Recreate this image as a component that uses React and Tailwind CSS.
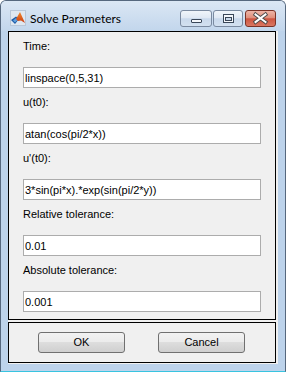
const fields = [
  { label: "Time:", value: "linspace(0,5,31)" },
  { label: "u(t0):", value: "atan(cos(pi/2*x))" },
  { label: "u'(t0):", value: "3*sin(pi*x).*exp(sin(pi/2*y))" },
  { label: "Relative tolerance:", value: "0.01" },
  { label: "Absolute tolerance:", value: "0.001" },
];

const MatlabIcon = () => (
  <svg width="16" height="16" viewBox="0 0 16 16">
    <defs>
      <linearGradient id="peak" x1="0" y1="0" x2="0" y2="1">
        <stop offset="0" stopColor="#f28a2c" />
        <stop offset="1" stopColor="#c93a12" />
      </linearGradient>
    </defs>
    <rect x="0.5" y="0.5" width="15" height="15" fill="#dfe7f0" stroke="#b9c7d8" />
    <polygon points="1,10 6,6.5 9,9 5,14" fill="#1d5aa6" />
    <polygon points="3,10.5 6,8 8,9.5 5,12.5" fill="#5fa0dc" />
    <polygon points="6,9 10,2 15,13 11,10.5 8,11" fill="url(#peak)" />
  </svg>
);

const CaptionButton = ({ kind }) => {
  if (kind === "close") {
    return (
      <div className="ml-[2px] h-[17px] w-[31px] rounded-[3px] border border-[#7a3226] bg-[linear-gradient(to_bottom,#eeb5a7_0%,#e08f7c_45%,#cd5540_52%,#da7762_100%)]">
        <svg width="29" height="15" viewBox="0 0 29 15">
          <path d="M9.5 3.5 L19.5 11 M19.5 3.5 L9.5 11" stroke="#4a4a4a" strokeWidth="3.8" strokeLinecap="square" />
          <path d="M9.5 3.5 L19.5 11 M19.5 3.5 L9.5 11" stroke="#ffffff" strokeWidth="2" strokeLinecap="square" />
        </svg>
      </div>
    );
  }
  return (
    <div
      className={`${kind === "max" ? "ml-[1px] w-[30px]" : "w-[32px]"} h-[17px] rounded-[3px] border border-[#7a8aa0] bg-[linear-gradient(to_bottom,#f0f5fa_0%,#e0e9f4_45%,#c9d9ec_52%,#d3e1f0_100%)]`}
    >
      {kind === "min" ? (
        <svg width="30" height="15" viewBox="0 0 30 15">
          <rect x="10.5" y="8.5" width="10" height="3" rx="0.5" fill="#f4f7fb" stroke="#3a4758" />
        </svg>
      ) : (
        <svg width="28" height="15" viewBox="0 0 28 15">
          <rect x="9.5" y="3.5" width="10" height="8" fill="#f4f7fb" stroke="#3a4758" />
          <rect x="11.5" y="6.5" width="6" height="3" fill="#c9d8ea" stroke="#3a4758" />
        </svg>
      )}
    </div>
  );
};

const WinButton = ({ children }) => (
  <button className="flex h-[21px] w-[87px] items-center justify-center rounded-[3px] border border-[#707070] bg-[linear-gradient(to_bottom,#f2f2f2_0%,#ebebeb_50%,#dddddd_50%,#cfcfcf_100%)] text-[11px] leading-none text-black">
    {children}
  </button>
);

export default function App() {
  return (
    <div className="h-[372px] w-[286px] bg-white font-['Liberation_Sans',Arial,sans-serif]">
      <div className="flex h-[372px] w-[286px] flex-col rounded-t-[6px] border border-[#56687e] border-b-[#38c4e0] bg-[#bdd3eb]">
        {/* title bar */}
        <div className="flex h-[30px] items-start rounded-t-[5px] bg-[linear-gradient(to_bottom,#dbe7f4,#c2d6ec)]">
          <div className="ml-[9px] mt-[9px]">
            <MatlabIcon />
          </div>
          <span className="ml-[4px] mt-[12px] font-['Lato',sans-serif] text-[12px] leading-[12px] text-black">
            Solve Parameters
          </span>
          <div className="ml-auto mr-[9px] mt-[9px] flex">
            <CaptionButton kind="min" />
            <CaptionButton kind="max" />
            <CaptionButton kind="close" />
          </div>
        </div>

        {/* client area */}
        <div className="mx-[7px] flex h-[333px] flex-col bg-[#f0f0f0] pr-[2px]">
          <div className="flex h-[289px] flex-col border border-black px-[14px] pb-[7px] pt-[8px]">
            {fields.map((f, i) => (
              <div key={i} className={i > 0 ? "mt-[8px]" : ""}>
                <div className="h-[13px] text-[11px] leading-[13px] text-black">{f.label}</div>
                <input
                  readOnly
                  defaultValue={f.value}
                  className="mt-[14px] block h-[21px] w-full border border-[#acacac] bg-white pl-[1px] text-[11px] text-black outline-none"
                />
              </div>
            ))}
          </div>
          <div className="mt-[2px] flex h-[41px] items-center gap-[33px] border border-black pl-[29px]">
            <WinButton>OK</WinButton>
            <WinButton>Cancel</WinButton>
          </div>
        </div>
      </div>
    </div>
  );
}
